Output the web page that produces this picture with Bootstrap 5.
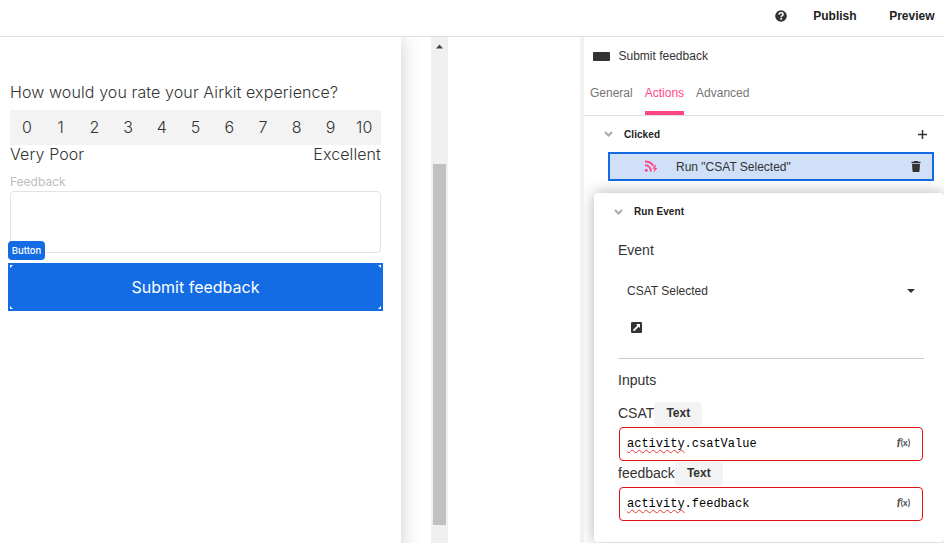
<!DOCTYPE html>
<html lang="en">
<head>
<meta charset="utf-8">
<meta name="viewport" content="width=device-width, initial-scale=1">
<title>Airkit Studio</title>
<link href="https://cdn.jsdelivr.net/npm/bootstrap@5.3.0/dist/css/bootstrap.min.css" rel="stylesheet">
<style>
body{font-family:"Liberation Sans",Arial,sans-serif;font-size:12px;line-height:16px;color:#333;height:543px;overflow:hidden;background:#fff}
svg{display:block;flex:none}
.topbar{height:37px;border-bottom:1px solid #e0e0e0;padding:0 9.500px 4px 0;color:#222}
.topbar .help{margin-right:26px}
.topbar .publish{margin-right:32.500px}
.workspace{height:506px}
.canvas{width:431px;overflow:hidden}
.device{width:401px;height:526px;padding:45px 20px 0 10px;box-shadow:0 0 20px rgba(0,0,0,.2);font-family:Inter,sans-serif;font-weight:300;font-size:16px;line-height:20px}
.question{height:28px;white-space:nowrap;letter-spacing:.107px}
.rating{height:35px;background:#f3f3f3;padding-bottom:2px}
.rating span{flex:1}
.ends{height:29px;line-height:18px;letter-spacing:.1px}
.fb-label{font-size:12px;line-height:16px;height:17px;color:#bdbdbd;font-weight:400}
.fb-input{height:62px;border:1px solid #e3e3e3;border-radius:4px}
.btn-wrap{margin:10px -2px 0;height:48px;background:#136ce4;padding:2px}
.submit{height:44px;color:#fff;font-weight:400}
.tag{left:0;top:-22px;width:37px;height:19px;border-radius:4px;background:#136ce4;color:#fff;font:500 9.5px/19px Inter,sans-serif}
.scroller{width:17px;background:#f0f0f0;padding-top:7px}
.thumb{width:13px;height:361px;background:#c1c1c1;margin-top:115px}
.gutter{width:132px}
.splitter{width:4px;background:#f1f1f1}
.inspector{width:360px;overflow:hidden}
.title-row{height:38px;padding:0 0 0 9px}
.swatch{width:17px;height:9px;border-radius:1px;background:#333;margin-right:8.500px}
.tabs-row{height:41px;padding-left:6px;border-bottom:1px solid #e0e0e0;gap:12px;color:#757575}
.tabs-row div{padding-top:10px;height:40px}
.tabs-row .current{color:#ff4783;border-bottom:4px solid #ff4783}
.section-head{font-size:10px;font-weight:700;color:#222}
.section-head span{margin-left:11px;letter-spacing:.07px;padding-top:1px}
.clicked-row{height:36px;padding:0 16px 0 20px}
.action-row{height:29px;margin:0 10px 0 24px;border:2px solid #136ce4;background:#cfe0f8;padding:0 11px 0 34px}
.action-row span{margin-left:18px}
.event-card{height:349px;margin:12px 0 0 10px;border-radius:4px;background:#fff;box-shadow:0 0 16px rgba(0,0,0,.3);padding:10px 20px 0 20px}
.field-head{font-size:14px;line-height:18px}
.event-title{margin-top:21px}
.select-row{padding:0 9px 0 13px;margin-top:24px}
.open-icon{margin:23px 0 0 17px}
.rule{height:1px;background:#ccc;margin:25px 0 12px 4px}
.first-input{margin-top:12px}
.input-head{height:26px}
.input-name{padding-bottom:2px}
.type-chip{width:48px;height:24px;border-radius:4px;background:#f3f3f3;font-size:12px;font-weight:700;padding-bottom:2px}
.code-box{height:34px;margin:0 1px 0 5px;border:1px solid #db1515;border-radius:4px;padding:0 12px 0 7px;font-family:"Liberation Mono",monospace;color:#000}
.squiggle{text-decoration:underline wavy #e53935 1px;text-underline-offset:2px;text-decoration-skip-ink:none}
.fx{font:italic 900 12px/16px Lato,sans-serif;color:#555;padding-bottom:3px}
.fx small{font-size:8.500px;font-style:normal}
</style>
<script src="https://cdn.jsdelivr.net/npm/bootstrap@5.3.0/dist/js/bootstrap.bundle.min.js"></script>
</head>
<body>
<header class="topbar d-flex align-items-center justify-content-end fw-bold">
  <svg class="help" width="12" height="12" viewBox="0 0 12 12"><circle cx="6" cy="6" r="5.8" fill="#333"/><path d="M4 4.6C4.1 3.3 5 2.7 6.1 2.7s2 .7 2 1.7C8.100 5.700 6.200 5.700 6.200 7.200" fill="none" stroke="#fff" stroke-width="1.500"/><rect x="5.300" y="8" width="1.700" height="1.600" fill="#fff"/></svg>
  <span class="publish">Publish</span><span>Preview</span>
</header>
<main class="workspace d-flex">
  <section class="canvas">
    <div class="device">
      <div class="question">How would you rate your Airkit experience?</div>
      <div class="rating d-flex align-items-center text-center"><span>0</span><span>1</span><span>2</span><span>3</span><span>4</span><span>5</span><span>6</span><span>7</span><span>8</span><span>9</span><span>10</span></div>
      <div class="ends d-flex justify-content-between"><span>Very Poor</span><span>Excellent</span></div>
      <div class="fb-label">Feedback</div>
      <div class="fb-input"></div>
      <div class="btn-wrap position-relative">
        <div class="submit d-flex align-items-center justify-content-center">Submit feedback</div>
        <span class="tag position-absolute text-center">Button</span>
        <svg class="position-absolute top-0 start-0" width="375" height="48"><path d="M2 2h3l-3 3zM373 2h-3l3 3zM2 46h3l-3-3zM373 46h-3l3-3z" fill="#fff"/></svg>
      </div>
    </div>
  </section>
  <div class="scroller d-flex flex-column align-items-center">
    <svg width="7" height="5" viewBox="0 0 7 5"><path d="M0 4.500 3.500.5 7 4.500z" fill="#444"/></svg>
    <div class="thumb"></div>
  </div>
  <div class="gutter"></div>
  <div class="splitter"></div>
  <aside class="inspector">
    <div class="title-row d-flex align-items-center"><span class="swatch"></span>Submit feedback</div>
    <div class="tabs-row d-flex"><div>General</div><div class="current">Actions</div><div>Advanced</div></div>
    <div class="clicked-row section-head d-flex align-items-center">
      <svg width="9" height="6" viewBox="0 0 9 6"><path d="M1 1l3.500 3.500L8 1" fill="none" stroke="#aaa" stroke-width="2"/></svg>
      <span class="me-auto">Clicked</span>
      <svg width="11" height="11" viewBox="0 0 11 11"><path d="M5.500 1v9M1 5.500h9" stroke="#333" stroke-width="1.500"/></svg>
    </div>
    <div class="action-row d-flex align-items-center">
      <svg width="14" height="13" viewBox="0 0 14 13" fill="none" stroke="#ff4783" stroke-width="1.900"><path d="M1 1.500c4.200 0 7 2 8.300 4.500M1 5.200c3.300 0 5.800 2.300 5.800 6.300"/><circle cx="2.300" cy="10.200" r="1.500" fill="#ff4783" stroke="none"/><path d="M11.500 4.800L8.300 8.800h2.200l-.9 3.800L13.500 8h-2.300l1-3.200z" fill="#ff4783" stroke="none"/></svg>
      <span class="me-auto">Run "CSAT Selected"</span>
      <svg width="10" height="11" viewBox="0 0 10 11"><path d="M3.300 0h3.400l.5.7H9.500v1.500H.5V.7h2.300zM1 3h8l-.5 7.200q0 .8-.8.8H2.300q-.8 0-.8-.8z" fill="#333"/></svg>
    </div>
    <div class="event-card">
      <div class="section-head d-flex align-items-center">
        <svg width="9" height="6" viewBox="0 0 9 6"><path d="M1 1l3.500 3.500L8 1" fill="none" stroke="#aaa" stroke-width="2"/></svg>
        <span>Run Event</span>
      </div>
      <div class="field-head event-title ms-1">Event</div>
      <div class="select-row d-flex align-items-center justify-content-between">
        <span>CSAT Selected</span>
        <svg width="8" height="4" viewBox="0 0 8 4"><path d="M0 0h8L4 4z" fill="#333"/></svg>
      </div>
      <svg class="open-icon" width="11" height="11" viewBox="0 0 11 11"><rect width="11" height="11" rx="1.200" fill="#333"/><path d="M5 2h4v4L7.700 4.700 3.200 9.200 1.900 7.900l4.500-4.500z" fill="#fff"/></svg>
      <div class="rule"></div>
      <div class="field-head ms-1">Inputs</div>
      <div class="input-head first-input field-head d-flex align-items-center ms-1"><span class="input-name">CSAT</span><span class="type-chip d-flex align-items-center justify-content-center">Text</span></div>
      <div class="code-box d-flex align-items-center justify-content-between"><span><span class="squiggle">activity</span>.csatValue</span><span class="fx">f<small>(x)</small></span></div>
      <div class="input-head field-head d-flex align-items-center ms-1"><span class="input-name">feedback</span><span class="type-chip d-flex align-items-center justify-content-center">Text</span></div>
      <div class="code-box d-flex align-items-center justify-content-between"><span><span class="squiggle">activity</span>.feedback</span><span class="fx">f<small>(x)</small></span></div>
    </div>
  </aside>
</main>
</body>
</html>
